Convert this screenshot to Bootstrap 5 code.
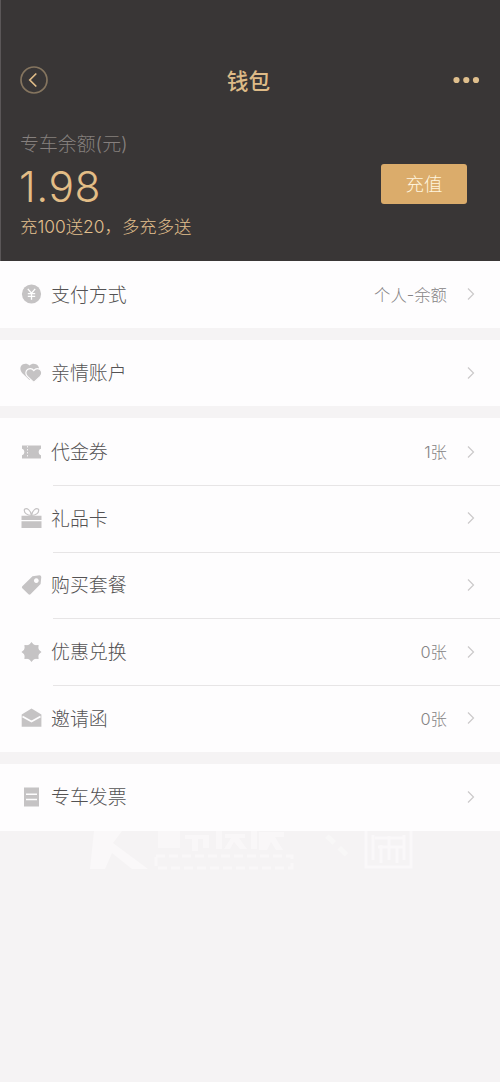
<!DOCTYPE html>
<html lang="zh-CN">
<head>
<meta charset="utf-8">
<meta name="viewport" content="width=device-width, initial-scale=1">
<title>钱包</title>
<link href="https://cdn.jsdelivr.net/npm/bootstrap@5.3.0/dist/css/bootstrap.min.css" rel="stylesheet">
<style>
body{background:#f5f3f4;font-family:Inter,"Noto Sans CJK SC",sans-serif;font-weight:300;color:#545253;min-height:1082px;overflow-x:hidden}
.wallet-head{background:#393636;height:261px;padding:60px 33px 0 19px;color:#dfb880;border-left:1px solid #5b5758}
.topbar{height:40px;margin-right:-13px}
.topbar svg{display:block}
.title-text{font-size:21.7px;font-weight:500;line-height:40px;color:#debb87;margin-right:3px;padding-top:1px}
.bal-label{font-size:18.9px;line-height:28px;color:#86807e;margin-top:31px}
.bal-num{font-size:42.5px;line-height:50px;margin-top:3px;margin-left:-1px;font-weight:350;letter-spacing:.5px;color:#e3bd86}
.bal-note{font-size:17.4px;line-height:26px;margin-top:2px;color:#e3c08e}
.charge{width:86px;height:40px;background:#dbac6b;color:#fff5df;border:0;border-radius:3px;font-size:18.5px;font-weight:300;padding:0;line-height:40px;margin-top:64px}
.entry{height:66.7px;padding:0 25px 0 20px;background:#fefdfe;font-size:18.9px}
.entry .me-auto{padding-top:3px}
.group-gap{margin-bottom:12px}
.entry svg.ico{width:22px;height:22px;fill:#c5c3c4;margin-right:9px;flex:none}
.entry .val{font-size:16.4px;color:#868485;margin-right:19px;padding-top:1px}
.entry .arrow{width:9px;height:14px;fill:none;stroke:#cbc9ca;stroke-width:1.2;flex:none}
.divided{position:relative}
.divided::after{content:"";position:absolute;left:53px;right:0;bottom:-1px;height:1px;background:#e7e5e6;z-index:1}
.ghost{display:block;margin-left:80px;filter:blur(.7px)}
</style>
</head>
<body>
<header class="wallet-head">
  <div class="topbar d-flex align-items-center justify-content-between">
    <svg width="28" height="28" viewBox="0 0 28 28" fill="none"><circle cx="14" cy="14" r="13" stroke="#85755f" stroke-width="1.7"/><path d="M16.300 7.500 9.800 14l6.500 6.500" stroke="#e0bc88" stroke-width="1.700"/></svg>
    <span class="title-text">钱包</span>
    <svg width="28" height="8" viewBox="0 0 28 8" fill="#dfbf8d"><circle cx="4.500" cy="4" r="3.100"/><circle cx="14.300" cy="4" r="3.100"/><circle cx="24" cy="4" r="3.100"/></svg>
  </div>
  <div class="d-flex justify-content-between">
    <div>
      <div class="bal-label">专车余额(元)</div>
      <div class="bal-num">1.98</div>
      <div class="bal-note">充100送20，多充多送</div>
    </div>
    <button class="btn charge align-self-start">充值</button>
  </div>
</header>
<main>
  <section class="group-gap">
    <div class="entry d-flex align-items-center">
      <svg class="ico" viewBox="0 0 22 22"><circle cx="11.5" cy="11" r="9.600"/><path d="M7.800 5.800l3.700 4.400 3.700-4.400M11.500 10v6.800M7.800 10.600h7.400M7.800 13.400h7.400" fill="none" stroke="#fff" stroke-width="1.300"/></svg>
      <span class="me-auto">支付方式</span><span class="val">个人-余额</span>
      <svg class="arrow" viewBox="0 0 9 14"><path d="M2 1.5 7.5 7 2 12.5"/></svg>
    </div>
  </section>
  <section class="group-gap">
    <div class="entry d-flex align-items-center">
      <svg class="ico" viewBox="0 0 22 22"><path d="M9.500 18 2.300 11.200C-.6 8-.1 3.700 3 2.200c2.300-1.100 4.800-.6 6.500 1.400 1.800-2 4.400-2.500 6.600-1.400 2.100 1 3.200 3.100 2.900 5.200z"/><path d="M13.800 20.400 7.400 14.400c-2.300-2.300-1.900-5.700.5-7.100 2-1.100 4.400-.6 5.900 1.200 1.500-1.800 3.900-2.300 5.900-1.200 2.400 1.400 2.800 4.800.5 7.100z" stroke="#fefdfe" stroke-width="1.200"/></svg>
      <span class="me-auto">亲情账户</span>
      <svg class="arrow" viewBox="0 0 9 14"><path d="M2 1.5 7.5 7 2 12.5"/></svg>
    </div>
  </section>
  <section class="group-gap">
    <div class="entry divided d-flex align-items-center">
      <svg class="ico" viewBox="0 0 22 22"><path d="M2 4.500h19v3.200c-1.700.7-2.300 1.800-2.300 3.300s.6 2.600 2.300 3.300v3.200H2v-3.200c1.700-.7 2.300-1.800 2.300-3.300S3.700 8.400 2 7.700z"/><path d="M7.500 5v12" fill="none" stroke="#f3f1f2" stroke-dasharray="1.500 1.500"/></svg>
      <span class="me-auto">代金券</span><span class="val">1张</span>
      <svg class="arrow" viewBox="0 0 9 14"><path d="M2 1.5 7.5 7 2 12.5"/></svg>
    </div>
    <div class="entry divided d-flex align-items-center">
      <svg class="ico" viewBox="0 0 22 22"><path d="M1.500 8.800h20v4.200h-20zM1.500 14.300h20v6.700h-20z"/><path d="M11.500 8.500C7 8.500 3.500 5.500 4.500 2.200c2.500-1.500 6 .5 7 6.300 1-5.800 4.500-7.800 7-6.300 1 3.300-2.500 6.300-7 6.300z" fill="none" stroke="#c5c3c4" stroke-width="1.200"/></svg>
      <span class="me-auto">礼品卡</span>
      <svg class="arrow" viewBox="0 0 9 14"><path d="M2 1.5 7.5 7 2 12.5"/></svg>
    </div>
    <div class="entry divided d-flex align-items-center">
      <svg class="ico" viewBox="0 0 22 22"><path fill-rule="evenodd" d="M12.500 2.300 19.500 1.200Q21.200 1.200 21.300 3l-.7 7L10.500 20.300q-1 .8-2 0l-6.200-6q-.9-1 0-2zM16.300 4.200a2.400 2.400 0 1 0 .01 0z"/></svg>
      <span class="me-auto">购买套餐</span>
      <svg class="arrow" viewBox="0 0 9 14"><path d="M2 1.5 7.5 7 2 12.5"/></svg>
    </div>
    <div class="entry divided d-flex align-items-center">
      <svg class="ico" viewBox="0 0 22 22"><path d="m11.500 1 2.700 3.200 4.400-.3-.3 4.400 3.200 2.700-3.200 2.700.3 4.400-4.400-.3-2.700 3.200-2.700-3.200-4.400.3.3-4.400L1.500 11l3.200-2.700-.3-4.400 4.400.3z"/><circle cx="11.500" cy="11" r="7.700"/></svg>
      <span class="me-auto">优惠兑换</span><span class="val">0张</span>
      <svg class="arrow" viewBox="0 0 9 14"><path d="M2 1.5 7.5 7 2 12.5"/></svg>
    </div>
    <div class="entry d-flex align-items-center">
      <svg class="ico" viewBox="0 0 22 22"><path d="M1.700 7.500 11.500 1.500l9.900 6v12.200H1.700z"/><path d="m2.500 9.500 9 5 9-5" fill="none" stroke="#fefdfe" stroke-width="1.800"/></svg>
      <span class="me-auto">邀请函</span><span class="val">0张</span>
      <svg class="arrow" viewBox="0 0 9 14"><path d="M2 1.5 7.5 7 2 12.5"/></svg>
    </div>
  </section>
  <section>
    <div class="entry d-flex align-items-center">
      <svg class="ico" viewBox="0 0 22 22"><path d="M4 1.500h15v19H4z"/><path d="M6 8.300h11M6 13.600h11" stroke="#fefdfe" stroke-width="1.500"/></svg>
      <span class="me-auto">专车发票</span>
      <svg class="arrow" viewBox="0 0 9 14"><path d="M2 1.5 7.5 7 2 12.5"/></svg>
    </div>
  </section>
  <!-- faint embossed emblem under the list -->
  <svg class="ghost" width="350" height="45" viewBox="0 0 350 45" fill="#faf8f9">
    <path d="M14 0h28L33 12 68 38H52L32 22 25 38H10z"/>
    <path d="M78 0v17h22V0zm27 0v4h24v13h-6V8h-5v12h-6V8h-7zm31 0h6v18h-6zm9 3h20v4h-6l8 11h-7l-6-7-4 7h-6l7-11h-6zm26-3h6v18h-6zm8 1h25v5h-9l8 13h-7l-5-8-4 8h-8z" opacity=".8"/>
    <path d="M76 25h136v12H76z" fill="none" stroke="#f9f7f8" stroke-width="3" stroke-dasharray="9 4"/>
    <path d="m247 5 24 23" fill="none" stroke="#f8f7f7" stroke-width="5" stroke-dasharray="10 7"/>
    <path d="M286 0v36h45V0M293 4v25M301 14v18M309 5v24M317 15v17M324 4v25M295 7h30M298 16h25" fill="none" stroke="#faf8f9" stroke-width="3"/>
  </svg>
</main>
<script src="https://cdn.jsdelivr.net/npm/bootstrap@5.3.0/dist/js/bootstrap.bundle.min.js"></script>
</body>
</html>
